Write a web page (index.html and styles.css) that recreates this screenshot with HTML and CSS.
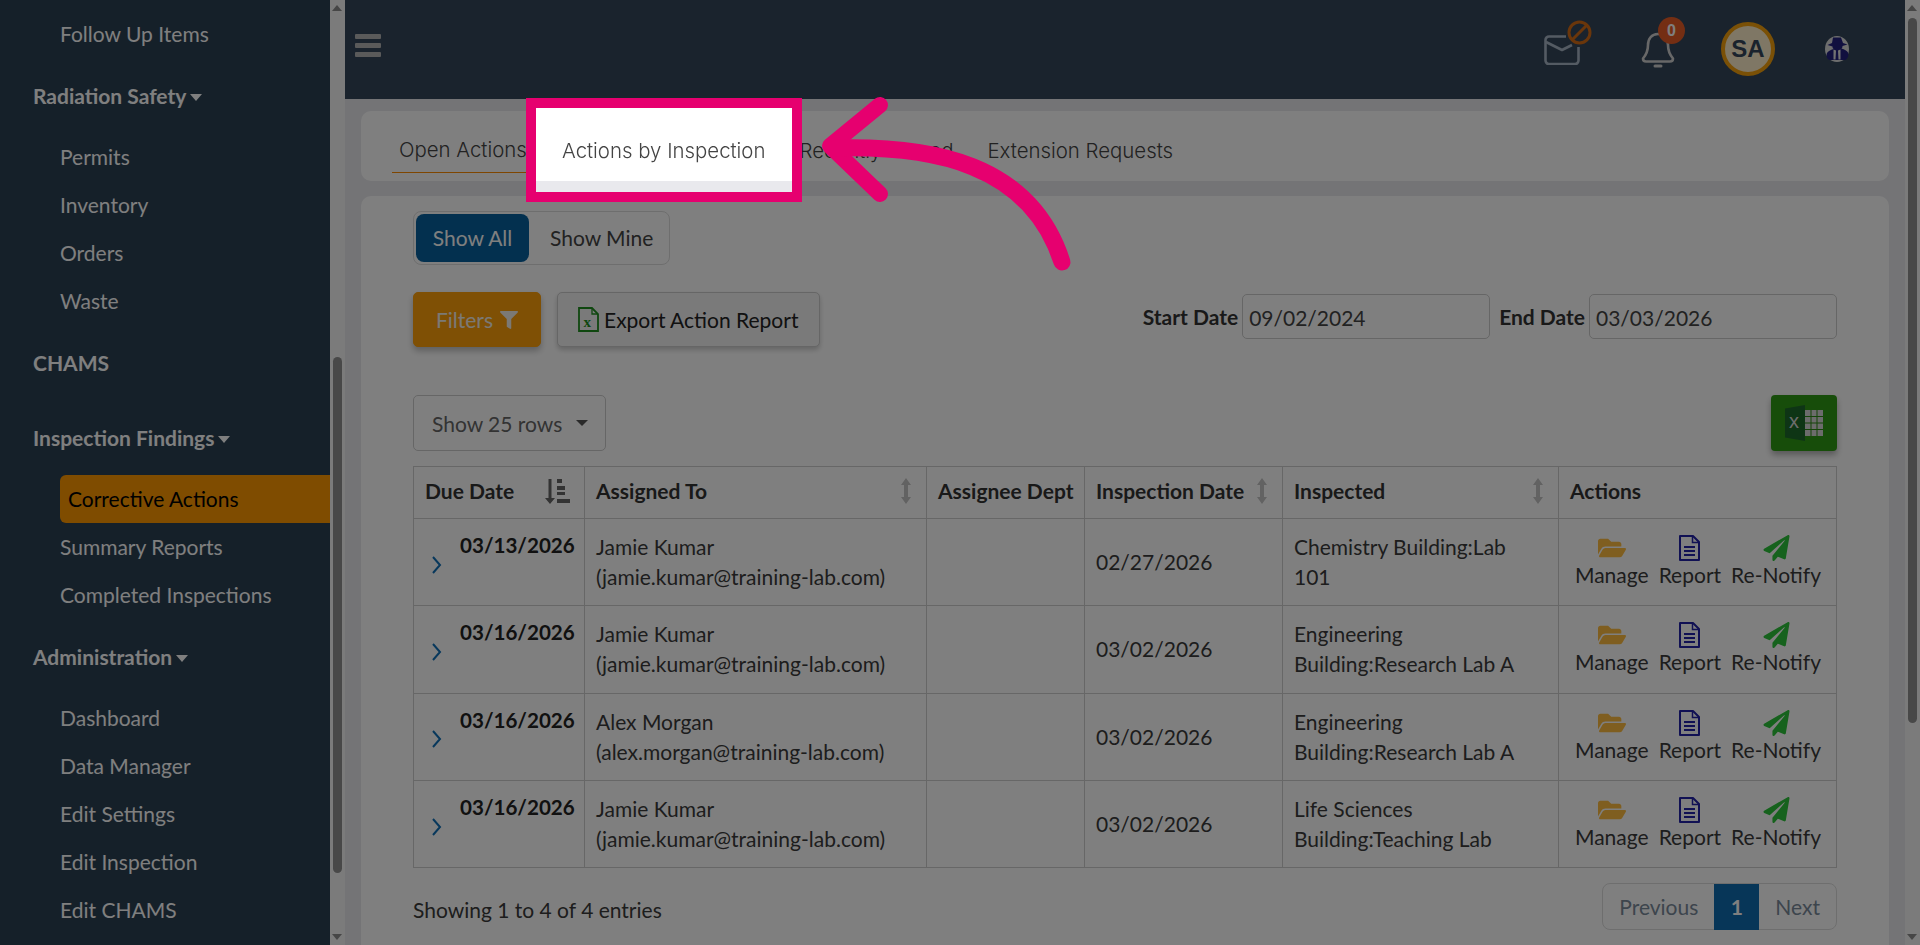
FILE: index.html
```html
<!DOCTYPE html>
<html lang="en">
<head>
    <meta charset="UTF-8">
    <title>Corrective Actions</title>
    <link rel="stylesheet" href="styles.css">
</head>
<body>

    <!-- icon sprite -->
    <svg class="sprite" xmlns="http://www.w3.org/2000/svg">
        <symbol id="i-folder" viewBox="0 0 576 512"><path d="M572.694 292.093L500.27 416.248A63.997 63.997 0 0 1 444.989 448H45.025c-18.523 0-30.064-20.093-20.731-36.093l72.424-124.155A64 64 0 0 1 152 256h399.964c18.523 0 30.064 20.093 20.73 36.093zM152 224h328v-48c0-26.51-21.49-48-48-48H272l-64-64H48C21.49 64 0 85.49 0 112v278.046l69.077-118.418C86.214 242.25 117.989 224 152 224z"/></symbol>
        <symbol id="i-file" viewBox="0 0 23 26"><path d="M2 1h13l6 6v18H2z" fill="none" stroke="currentColor" stroke-width="2" stroke-linejoin="round"/><path d="M14.500 1.500V7.500H20.500" fill="none" stroke="currentColor" stroke-width="1.500"/><path d="M6 12h11M6 16h11M6 20h11" stroke="currentColor" stroke-width="2"/></symbol>
        <symbol id="i-plane" viewBox="0 0 512 512"><path d="M476 3.2L12.5 270.6c-18.1 10.4-15.8 35.6 2.2 43.2L121 358.4l287.3-253.2c5.5-4.9 13.3 2.6 8.6 8.3L176 407v80.5c0 23.6 28.5 32.9 42.5 15.8L282 426l124.6 52.2c14.2 6 30.4-2.9 33-18.2l72-432C515 7.8 493.3-6.8 476 3.2z"/></symbol>
        <symbol id="i-chevron" viewBox="0 0 12 20"><path d="M2 2l7 8-7 8" fill="none" stroke="currentColor" stroke-width="2"/></symbol>
        <symbol id="i-sort" viewBox="0 0 12 26"><path d="M6 0L11 7H8V19H11L6 26L1 19H4V7H1Z" fill="currentColor"/></symbol>
    </svg>

    <div class="page">
        <nav class="sidebar">
            <a class="side-link">Follow Up Items</a>
            <a class="side-head">Radiation Safety<span class="caret"></span></a>
            <a class="side-link">Permits</a>
            <a class="side-link">Inventory</a>
            <a class="side-link">Orders</a>
            <a class="side-link">Waste</a>
            <a class="side-head">CHAMS</a>
            <a class="side-head side-head-gap">Inspection Findings<span class="caret"></span></a>
            <a class="side-link active">Corrective Actions</a>
            <a class="side-link">Summary Reports</a>
            <a class="side-link">Completed Inspections</a>
            <a class="side-head">Administration<span class="caret"></span></a>
            <a class="side-link">Dashboard</a>
            <a class="side-link">Data Manager</a>
            <a class="side-link">Edit Settings</a>
            <a class="side-link">Edit Inspection</a>
            <a class="side-link">Edit CHAMS</a>
        </nav>
        <div class="scrollbar side-scroll"><span class="thumb"></span></div>

        <div class="main">
            <header class="topbar">
                <div class="burger"><span></span><span></span><span></span></div>
                <div class="top-icons">
                    <div class="mail-icon">
                        <svg width="36" height="30" viewBox="0 0 36 30" fill="none" stroke="#a9b6c6" stroke-width="2.600" stroke-linejoin="round"><path d="M22 1.500H5a3.500 3.500 0 0 0-3.500 3.500v20.500a3.500 3.500 0 0 0 3.500 3.500h26a3.500 3.500 0 0 0 3.500-3.500V12"/><path d="M2 7l16 8 10-5"/></svg>
                        <svg class="mail-block" width="25" height="25" viewBox="0 0 25 25" fill="none" stroke="#d46c16" stroke-width="3"><circle cx="12.500" cy="12.500" r="10.500"/><path d="M20 5l-15 15"/></svg>
                    </div>
                    <div class="bell-icon">
                        <svg width="34" height="37" viewBox="0 0 34 37" fill="none" stroke="#d0d0d0" stroke-width="2.600" stroke-linejoin="round"><path d="M17 2C10.500 2 7 7 7 13c0 7-2 10-5 13.500 0 2 1 3 3 3h24c2 0 3-1 3-3C29 23 27 20 27 13c0-6-3.500-11-10-11z"/><path d="M14 34h6" stroke-linecap="round" stroke-width="3"/></svg>
                        <span class="bell-badge">0</span>
                    </div>
                    <div class="avatar">SA</div>
                    <svg class="org-logo" width="24" height="26" viewBox="0 0 24 26"><ellipse cx="12" cy="13" rx="12" ry="13" fill="#dcdcdc"/><path d="M8 1.500h8l2 5.500 4.500 1.500-5 1.500c0 1.500-.5 2-1 2.500 3 1 5.500 2 6.500 4 1 3 0 6-2.500 7.500h-16C2 23 1 20 2 17c1-2 3.500-3 6.500-4-.5-.5-1-1-1-2.500l-5-1.500L7 7z" fill="#23217f"/><path d="M8.500 13.500l2.500 1-.5 9H8.500zM15.500 13.500l-2.500 1 .5 9h2z" fill="#e4e4e4"/></svg>
                </div>
            </header>

            <div class="content">
                <div class="tabs-card">
                    <a class="tab tab-on">Open Actions</a>
                    <a class="tab tab-spot">Actions by Inspection</a>
                    <a class="tab">Recently Closed</a>
                    <a class="tab">Extension Requests</a>
                </div>

                <section class="card">
                    <div class="toggle">
                        <button class="toggle-btn toggle-on">Show All</button>
                        <button class="toggle-btn">Show Mine</button>
                    </div>

                    <div class="tools">
                        <button class="btn-filter">Filters
                            <svg width="18" height="18" viewBox="0 0 512 512" fill="currentColor"><path d="M487.976 0H24.028C2.71 0-8.047 25.866 7.058 40.971L192 225.941V432c0 7.831 3.821 15.17 10.237 19.662l80 55.98C298.020 518.690 320 507.493 320 487.980V225.941l184.947-184.970C520.021 25.896 509.338 0 487.976 0z"/></svg>
                        </button>
                        <button class="btn-export">
                            <svg width="21" height="25" viewBox="0 0 21 25" fill="none" stroke="#1f8f1f" stroke-width="1.800"><path d="M1 1h13l6 6v17H1z"/><path d="M14 1v6h6" stroke-width="1.300"/><text x="5.500" y="20" class="file-x">x</text></svg>
                            Export Action Report
                        </button>
                        <div class="dates">
                            <label class="date-label">Start Date</label>
                            <div class="date-input">09/02/2024</div>
                            <label class="date-label">End Date</label>
                            <div class="date-input">03/03/2026</div>
                        </div>
                    </div>

                    <div class="table-tools">
                        <div class="rows-select">Show 25 rows<span class="rows-caret"></span></div>
                        <button class="btn-excel">
                            <svg width="38" height="38" viewBox="0 0 38 38"><path d="M20 1L0 4.500v29L20 37z" fill="#1d6b2b"/><rect x="20" y="6" width="18" height="26" fill="#d8d8d8"/><path d="M26 6v26M32 6v26M20 12.500h18M20 19h18M20 25.500h18" stroke="#2a8a12" stroke-width="1"/><text x="4" y="24" class="excel-x">x</text></svg>
                        </button>
                    </div>

                    <table class="grid">
                        <colgroup>
                            <col class="c-due"><col class="c-who"><col class="c-dept"><col class="c-date"><col class="c-place"><col class="c-act">
                        </colgroup>
                        <thead>
                            <tr>
                                <th>Due Date
                                    <svg class="sort-on" width="26" height="26" viewBox="0 0 26 26" fill="currentColor"><path d="M4.500 1h3v19h3.500l-5 6-5-6h3.500z"/><rect x="13" y="1" width="5" height="4"/><rect x="13" y="8" width="8" height="4"/><rect x="13" y="14" width="8" height="3"/><rect x="13" y="21" width="13" height="4"/></svg>
                                </th>
                                <th>Assigned To<svg class="sort"><use href="#i-sort"/></svg></th>
                                <th>Assignee Dept</th>
                                <th>Inspection Date<svg class="sort"><use href="#i-sort"/></svg></th>
                                <th>Inspected<svg class="sort"><use href="#i-sort"/></svg></th>
                                <th>Actions</th>
                            </tr>
                        </thead>
                        <tbody id="rows"></tbody>
                    </table>

                    <div class="table-foot">
                        <div class="entries">Showing 1 to 4 of 4 entries</div>
                        <div class="pager">
                            <a class="page-link">Previous</a>
                            <a class="page-num">1</a>
                            <a class="page-link">Next</a>
                        </div>
                    </div>
                </section>
            </div>
        </div>
        <div class="scrollbar page-scroll"><span class="thumb"></span></div>
    </div>

    <!-- dimming layer with the highlighted tab and arrow on top of it -->
    <div class="dim"></div>
    <div class="spot"></div>
    <svg class="arrow" width="1920" height="945" viewBox="0 0 1920 945" fill="none" stroke="#e6006f" stroke-linecap="round" stroke-linejoin="round">
        <path d="M880 105L830 146 880 194" stroke-width="16"/>
        <path d="M838 148C930 146 1030 162 1062 262" stroke-width="17"/>
    </svg>

    <script>
        const rows = [
            ['03/13/2026', 'Jamie Kumar', '(jamie.kumar@training-lab.com)', '02/27/2026', 'Chemistry Building:Lab 101'],
            ['03/16/2026', 'Jamie Kumar', '(jamie.kumar@training-lab.com)', '03/02/2026', 'Engineering Building:Research Lab A'],
            ['03/16/2026', 'Alex Morgan', '(alex.morgan@training-lab.com)', '03/02/2026', 'Engineering Building:Research Lab A'],
            ['03/16/2026', 'Jamie Kumar', '(jamie.kumar@training-lab.com)', '03/02/2026', 'Life Sciences Building:Teaching Lab']
        ];

        document.getElementById('rows').innerHTML = rows.map(function(r) {
            return '<tr>' +
                '<td class="due"><svg class="chev"><use href="#i-chevron"/></svg><b>' + r[0] + '</b></td>' +
                '<td>' + r[1] + '<br>' + r[2] + '</td>' +
                '<td></td>' +
                '<td>' + r[3] + '</td>' +
                '<td>' + r[4] + '</td>' +
                '<td><div class="acts">' +
                    '<a class="act"><svg class="ic-folder"><use href="#i-folder"/></svg>Manage</a>' +
                    '<a class="act"><svg class="ic-file"><use href="#i-file"/></svg>Report</a>' +
                    '<a class="act"><svg class="ic-plane"><use href="#i-plane"/></svg>Re-Notify</a>' +
                '</div></td>' +
            '</tr>';
        }).join('');
    </script>

</body>
</html>
```

FILE: styles.css
```css
* {
    box-sizing: border-box;
}
html, body {
    margin: 0;
    height: 945px;
    overflow: hidden;
}
body {
    font-family: "Lato", "Liberation Sans", sans-serif;
    font-size: 21px;
    color: #3a3a3a;
    background-color: #e9e9ed;
}
.sprite {
    display: none;
}
.page {
    display: flex;
    height: 945px;
}

/* Sidebar */
.sidebar {
    width: 330px;
    flex: none;
    padding-top: 10px;
    background-color: #2a4052;
    overflow: hidden;
}
.side-link {
    display: block;
    height: 48px;
    line-height: 48px;
    margin-left: 60px;
    color: #fff;
}
.side-link.active {
    padding-left: 8px;
    color: #000;
    background-color: #ff9800;
    border-radius: 6px 0 0 6px;
}
.side-head {
    display: block;
    height: 48px;
    line-height: 48px;
    margin: 14px 0 13px 33px;
    font-weight: 700;
    color: #fff;
}
.side-head-gap {
    margin-top: 27px;
}
.caret {
    display: inline-block;
    margin-left: 4px;
    vertical-align: 3px;
    border-left: 6.500px solid transparent;
    border-right: 6.500px solid transparent;
    border-top: 7px solid #fff;
}

/* Scrollbars */
.scrollbar {
    position: relative;
    width: 15px;
    flex: none;
    background-color: #f7f7f7;
}
.scrollbar::before,
.scrollbar::after {
    content: "";
    position: absolute;
    left: 2px;
    border-left: 5px solid transparent;
    border-right: 5px solid transparent;
}
.scrollbar::before {
    top: 5px;
    border-bottom: 6px solid #8c8c8c;
}
.scrollbar::after {
    bottom: 5px;
    border-top: 6px solid #8c8c8c;
}
.thumb {
    position: absolute;
    left: 3px;
    width: 9px;
    background-color: #919191;
    border-radius: 5px;
}
.side-scroll .thumb {
    top: 357px;
    height: 516px;
}
.page-scroll .thumb {
    top: 18px;
    height: 705px;
}

/* Top bar */
.main {
    flex: 1;
    min-width: 0;
}
.topbar {
    display: flex;
    align-items: center;
    justify-content: space-between;
    height: 99px;
    padding: 0 56px 2px 10px;
    background-color: #34465a;
}
.burger {
    display: flex;
    flex-direction: column;
    gap: 4px;
    margin-bottom: 7px;
}
.burger span {
    width: 26px;
    height: 5px;
    background-color: #b5b5b5;
    border-radius: 1px;
}
.top-icons {
    display: flex;
    align-items: center;
}
.mail-icon {
    position: relative;
    margin: 3px 61px 0 0;
    line-height: 0;
}
.mail-block {
    position: absolute;
    top: -15px;
    right: -12px;
}
.bell-icon {
    position: relative;
    margin: 3px 46px 0 0;
    line-height: 0;
}
.bell-badge {
    position: absolute;
    top: -15px;
    right: -10px;
    width: 27px;
    height: 27px;
    line-height: 27px;
    text-align: center;
    font-family: "Liberation Sans", sans-serif;
    font-size: 16px;
    font-weight: 700;
    color: #fff;
    background-color: #e85d27;
    border-radius: 50%;
}
.avatar {
    width: 54px;
    height: 54px;
    line-height: 46px;
    margin-right: 50px;
    text-align: center;
    font-family: "Liberation Sans", sans-serif;
    font-size: 24px;
    font-weight: 700;
    color: #34465a;
    background-color: #ffeecb;
    border: 4px solid #f5a10d;
    border-radius: 50%;
}

/* Cards */
.content {
    padding: 12px 16px 0;
}
.tabs-card {
    display: flex;
    height: 70px;
    padding: 0 31px;
    margin-bottom: 15px;
    background-color: #fff;
    border-radius: 10px;
}
.tab {
    display: flex;
    align-items: center;
    height: 62px;
    padding-top: 16px;
    margin-right: 34px;
    font-family: "Inter", sans-serif;
    font-weight: 300;
    font-size: 20.400px;
    white-space: nowrap;
    color: #444;
}
.tab-on {
    width: 145px;
    margin-right: 25px;
    padding-left: 7px;
    border-bottom: 1px solid #ff8c00;
}
.card {
    height: 760px;
    padding: 15px 52px;
    background-color: #fff;
    border-radius: 10px 10px 0 0;
}

/* Show all toggle */
.toggle {
    display: inline-flex;
    padding: 2px;
    width: 257px;
    height: 54px;
    border: 1px solid #ddd;
    border-radius: 8px;
}
.toggle-btn {
    width: 136px;
    height: 48px;
    padding: 0 0 2px 21px;
    text-align: left;
    white-space: nowrap;
    font: 21px "Lato", sans-serif;
    color: #444;
    background: none;
    border: none;
    border-radius: 8px;
}
.toggle-on {
    width: 113px;
    padding: 0 0 2px;
    text-align: center;
    color: #fff;
    background-color: #07609e;
}

/* Filter and date row */
.tools {
    display: flex;
    align-items: flex-start;
    margin-top: 27px;
}
.btn-filter {
    display: flex;
    align-items: center;
    justify-content: center;
    gap: 7px;
    width: 128px;
    height: 55px;
    font: 21px "Lato", sans-serif;
    color: #f6f2ea;
    background-color: #ffa00a;
    border: 1px solid #ffa00a;
    border-radius: 5px;
    box-shadow: 0 4px 6px rgba(0, 0, 0, 0.25);
}
.btn-export {
    display: flex;
    align-items: center;
    gap: 5px;
    width: 263px;
    height: 55px;
    margin-left: 16px;
    padding-left: 20px;
    font: 21px "Lato", sans-serif;
    color: #222;
    background-color: #f4f4f4;
    border: 1px solid #ccc;
    border-radius: 5px;
    box-shadow: 0 3px 5px rgba(0, 0, 0, 0.2);
}
.file-x {
    font-family: "Liberation Serif", serif;
    font-size: 15px;
    font-weight: 700;
    fill: #1f8f1f;
    stroke: none;
}
.dates {
    display: flex;
    align-items: center;
    margin-left: auto;
    margin-top: 2px;
}
.date-label {
    font-weight: 700;
    color: #333;
    margin-right: 4px;
}
.date-input {
    width: 248px;
    height: 45px;
    line-height: 45px;
    padding-left: 6px;
    margin-right: 9px;
    color: #444;
    border: 1px solid #ccc;
    border-radius: 5px;
}
.date-input:last-child {
    margin-right: 0;
}

/* Table */
.table-tools {
    display: flex;
    justify-content: space-between;
    margin-top: 48px;
}
.rows-select {
    display: flex;
    align-items: center;
    width: 193px;
    height: 56px;
    padding-left: 18px;
    color: #666;
    border: 1px solid #ccc;
    border-radius: 5px;
}
.rows-caret {
    margin-left: 14px;
    border-left: 6px solid transparent;
    border-right: 6px solid transparent;
    border-top: 6px solid #555;
}
.btn-excel {
    display: flex;
    align-items: center;
    justify-content: center;
    width: 66px;
    height: 56px;
    padding: 0;
    background-color: #2f9a14;
    border: none;
    border-radius: 4px;
    box-shadow: 0 4px 6px rgba(0, 0, 0, 0.3);
}
.excel-x {
    font-family: "Liberation Sans", sans-serif;
    font-size: 20px;
    fill: #d8d8d8;
}
.grid {
    width: 1423px;
    margin-top: 15px;
    table-layout: fixed;
    border-collapse: collapse;
    line-height: 30px;
}
.c-due { width: 171px; }
.c-who { width: 342px; }
.c-dept { width: 158px; }
.c-date { width: 198px; }
.c-place { width: 276px; }
.c-act { width: 278px; }
.grid th, .grid td {
    border: 1px solid #cfcfcf;
    padding: 0 14px 0 11px;
}
.grid th {
    position: relative;
    height: 52px;
    padding: 0 6px 3px 11px;
    white-space: nowrap;
    text-align: left;
    font-weight: 700;
    color: #333;
}
.grid td {
    height: 87.250px;
    vertical-align: middle;
}
.sort, .sort-on {
    position: absolute;
    top: 11px;
    right: 14px;
}
.sort {
    width: 12px;
    height: 26px;
    color: #c5c5c5;
}
.sort-on {
    color: #666;
}
.grid td.due {
    padding-right: 0;
    white-space: nowrap;
}
.due b {
    display: inline-block;
    vertical-align: top;
    margin: -17px 0 0 17px;
    font-size: 20.600px;
    color: #222;
}
.chev {
    width: 12px;
    height: 20px;
    margin-left: 6px;
    color: #1070b8;
    vertical-align: middle;
}
.acts {
    display: flex;
    justify-content: space-between;
    margin: 0 1px 0 5px;
}
.act {
    display: flex;
    flex-direction: column;
    align-items: center;
    line-height: 28px;
}
.act svg {
    height: 26px;
}
.ic-folder {
    width: 28px;
    fill: #ffbd40;
}
.ic-file {
    width: 23px;
    color: #2222a8;
}
.ic-plane {
    width: 27px;
    fill: #2cc43a;
}

/* Table footer */
.table-foot {
    display: flex;
    justify-content: space-between;
    margin-top: 15px;
}
.entries {
    padding-top: 14px;
}
.pager {
    display: flex;
    align-items: center;
    height: 47px;
    border: 1px solid #ddd;
    border-radius: 8px;
}
.page-link {
    padding: 0 16px;
    color: #7a8a9a;
}
.page-num {
    width: 45px;
    height: 46px;
    line-height: 46px;
    text-align: center;
    font-weight: 700;
    color: #fff;
    background-color: #0f6cb0;
}

/* Tutorial overlay */
.dim {
    position: fixed;
    inset: 0;
    z-index: 1;
    background-color: rgba(0, 0, 0, 0.5);
}
.spot {
    position: fixed;
    left: 526px;
    top: 98px;
    z-index: 2;
    width: 276px;
    height: 104px;
    border: 10px solid #e6006f;
    background: linear-gradient(#fff 73px, #e9e9ed 73px);
}
.tab-spot {
    position: relative;
    z-index: 3;
}
.arrow {
    position: fixed;
    left: 0;
    top: 0;
    z-index: 4;
}
```
